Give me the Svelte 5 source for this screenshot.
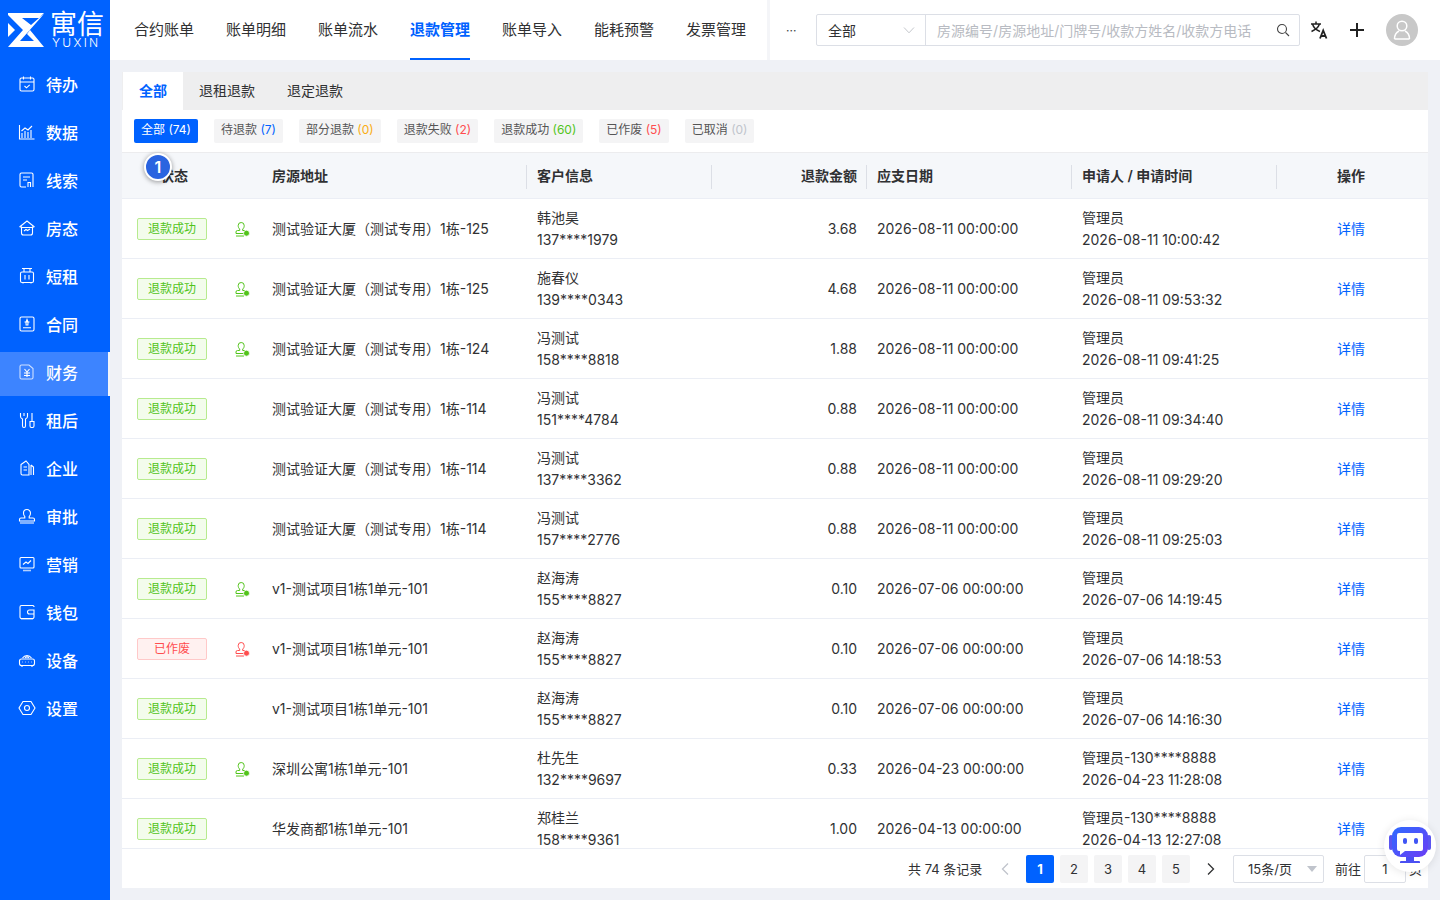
<script>
  const menu = [
    ['待办', 'todo'], ['数据', 'data'], ['线索', 'clue'], ['房态', 'house'], ['短租', 'short'], ['合同', 'contract'],
    ['财务', 'finance'], ['租后', 'after'], ['企业', 'company'], ['审批', 'approve'], ['营销', 'market'], ['钱包', 'wallet'], ['设备', 'device'], ['设置', 'setting']
  ];
  const nav = ['合约账单', '账单明细', '账单流水', '退款管理', '账单导入', '能耗预警', '发票管理'];
  const chips = [
    ['全部', '(74)', 'c-white', true], ['待退款', '(7)', 'c-blue'], ['部分退款', '(0)', 'c-orange'], ['退款失败', '(2)', 'c-red'],
    ['退款成功', '(60)', 'c-green'], ['已作废', '(5)', 'c-red'], ['已取消', '(0)', 'c-gray']
  ];
  const addrA = '测试验证大厦（测试专用）1栋-';
  const v1 = 'v1-测试项目1栋1单元-101';
  const rows = [
    ['ok', 'g', addrA + '125', '韩池昊', '137****1979', '3.68', '2026-08-11', '管理员', '2026-08-11 10:00:42'],
    ['ok', 'g', addrA + '125', '施春仪', '139****0343', '4.68', '2026-08-11', '管理员', '2026-08-11 09:53:32'],
    ['ok', 'g', addrA + '124', '冯测试', '158****8818', '1.88', '2026-08-11', '管理员', '2026-08-11 09:41:25'],
    ['ok', '', addrA + '114', '冯测试', '151****4784', '0.88', '2026-08-11', '管理员', '2026-08-11 09:34:40'],
    ['ok', '', addrA + '114', '冯测试', '137****3362', '0.88', '2026-08-11', '管理员', '2026-08-11 09:29:20'],
    ['ok', '', addrA + '114', '冯测试', '157****2776', '0.88', '2026-08-11', '管理员', '2026-08-11 09:25:03'],
    ['ok', 'g', v1, '赵海涛', '155****8827', '0.10', '2026-07-06', '管理员', '2026-07-06 14:19:45'],
    ['void', 'r', v1, '赵海涛', '155****8827', '0.10', '2026-07-06', '管理员', '2026-07-06 14:18:53'],
    ['ok', '', v1, '赵海涛', '155****8827', '0.10', '2026-07-06', '管理员', '2026-07-06 14:16:30'],
    ['ok', 'g', '深圳公寓1栋1单元-101', '杜先生', '132****9697', '0.33', '2026-04-23', '管理员-130****8888', '2026-04-23 11:28:08'],
    ['ok', '', '华发商都1栋1单元-101', '郑桂兰', '158****9361', '1.00', '2026-04-13', '管理员-130****8888', '2026-04-13 12:27:08']
  ];
  const heads = ['状态', '房源地址', '客户信息', '退款金额', '应支日期', '申请人 / 申请时间', '操作'];
</script>

<div class="page">
  <aside class="side">
    <div class="logo">
      <svg class="logo-mark" viewBox="0 0 36 34" width="36" height="34">
        <path fill="#fff" d="M0 0H36L31 5 H14 L23 12 L31 5 L36 1 L12 28 H26 L19 21 L22 17 L36 34 H0 L15 17 L0 2Z"/>
        <path fill="#0062ff" d="M0 7 L10 17 L0 27Z"/>
        <path fill="#fff" d="M0 10 L7 17 L0 24Z"/>
      </svg>
      <div class="logo-text">
        <div class="logo-cn">寓信</div>
        <div class="logo-en">YUXIN</div>
      </div>
    </div>
    {#each menu as [label, icon]}
      <div class="item" class:active={icon === 'finance'}>
        <svg class="mi" viewBox="0 0 18 18" width="18" height="18" fill="none" stroke="#fff" stroke-width="1.1">
          {#if icon === 'todo'}
            <rect x="2" y="3" width="14" height="13" rx="1.5"/><path d="M2 7h14M5.5 1.5v3M12.5 1.5v3M6.5 11l2 1.8 3.2-3" />
          {:else if icon === 'data'}
            <path d="M1.5 2v14h15M4 15V10M7 15V8M10 15V9M13 15V7M3.5 8 7 5l3 2 4-4"/>
          {:else if icon === 'clue'}
            <path d="M8 16H3.5A1.5 1.5 0 0 1 2 14.500V3.500A1.500 1.500 0 0 1 3.500 2h10A1.500 1.500 0 0 1 15 3.500V16M5 6h7M5 9h4M10 16v-4.500h2.500V16"/>
          {:else if icon === 'house'}
            <path d="M1.500 8 9 2l7.500 6M3.500 7.500V14a2 2 0 0 0 2 2h7a2 2 0 0 0 2-2V7.500M2.500 8.500h13M6 12l2-1.500 1.500 1L12 10"/>
          {:else if icon === 'short'}
            <rect x="2.500" y="5" width="13" height="10.500" rx="1.500"/><path d="M4 1.500h10M6 1.500V5M12 1.500V5M7 8v4.500M11 8v4.500M5 15.500v1M13 15.500v1"/>
          {:else if icon === 'contract'}
            <rect x="2" y="2" width="14" height="14" rx="1.500"/><path d="M5 12.800h8M6.500 7h5M9 4.500l1 2.500-.1 3H8.100L8 7z"/>
          {:else if icon === 'finance'}
            <path opacity=".75" d="M3.500 2H11l4 3.500V14.500A1.500 1.500 0 0 1 13.500 16h-10A1.500 1.500 0 0 1 2 14.500V3.500A1.500 1.500 0 0 1 3.500 2Z"/>
            <path d="M6.500 6 9 9l2.500-3M6 10h6M6 12.500h6M9 9v5"/>
          {:else if icon === 'after'}
            <path d="M2.500 2v3.200a3 3 0 0 0 2 2.800v7a1.500 1.500 0 0 0 3 0V8a3 3 0 0 0 2-2.800V2M6 2v3M12 10.500h4V15a1.500 1.500 0 0 1-1.500 1.500H13.500A1.500 1.500 0 0 1 12 15zM14 2v8.500"/>
          {:else if icon === 'company'}
            <path d="M3 5.500 8 2l3 3.500V16H4.500A1.500 1.500 0 0 1 3 14.500zM5.500 8H9M5.500 11H9M13 6l2.500 2v8M13 16V6"/>
          {:else if icon === 'approve'}
            <path d="M6.800 9.500C5.500 8.600 5.500 7.500 5.500 6a3.500 3.500 0 0 1 7 0c0 1.500 0 2.600-1.300 3.500v1.500h3.800a1.500 1.500 0 0 1 1.500 1.500V14H1.500v-1.500A1.500 1.500 0 0 1 3 11h3.800zM2 16h14"/>
          {:else if icon === 'market'}
            <rect x="2" y="2.500" width="14" height="10.500" rx="1"/><path d="M5 9.500 8 7l2 1.500L13 5.500"/><path stroke-width="1.600" opacity=".7" d="M5 15.500h8"/>
          {:else if icon === 'wallet'}
            <path d="M16 4V3.500A1.500 1.500 0 0 0 14.500 2.500H3.500A1.500 1.500 0 0 0 2 4v10a1.500 1.500 0 0 0 1.500 1.500h11A1.500 1.500 0 0 0 16 14V11M16 7h-4.500a2 2 0 0 0 0 4H16z"/><path opacity=".7" d="M3 16h12"/>
          {:else if icon === 'device'}
            <rect x="1.500" y="8" width="15" height="6.500" rx="2"/><path d="M4 11h.6M7 11h.6M10.200 11h.6M13 11h.6M4 14.500V16M14 14.500V16M4.500 7a5.500 5.500 0 0 1 9 0M7 7a2.500 2.500 0 0 1 4 0"/>
          {:else}
            <path d="M5 2.500h8L17 9l-4 6.500H5L1 9z"/><circle cx="9" cy="9" r="2.500"/>
          {/if}
        </svg>
        <span>{label}</span>
      </div>
    {/each}
  </aside>

  <div class="body">
    <header class="top">
      <nav class="nav">
        {#each nav as n}
          <div class="nav-item" class:on={n === '退款管理'}>{n}</div>
        {/each}
      </nav>
      <div class="tools">
        <div class="more">···</div>
        <div class="search">
          <div class="sel">
            <span>全部</span>
            <svg width="12" height="8" viewBox="0 0 12 8" fill="none" stroke="#c4c7cc"><path d="M1 1.500 6 6.800 11 1.500"/></svg>
          </div>
          <div class="inp">
            <span>房源编号/房源地址/门牌号/收款方姓名/收款方电话</span>
            <svg width="14" height="14" viewBox="0 0 14 14" fill="none" stroke="#444" stroke-width="1.100"><circle cx="6" cy="6" r="4.500"/><path d="M9.500 9.500 13 13"/></svg>
          </div>
        </div>
        <svg class="tr" width="20" height="20" viewBox="0 0 20 20" fill="none" stroke="#222" stroke-width="1.500">
          <path d="M2 4h10M7 1.500V4M3.500 4c1 3.500 3.500 6 7.500 7.500M10.500 4C9.500 7 7 9.500 2.500 11.500"/>
          <path stroke-width="1.800" d="M11 18.500 14.200 10.500 17.500 18.500M12 16h4.500"/>
        </svg>
        <svg class="plus" width="16" height="16" viewBox="0 0 16 16" stroke="#222" stroke-width="2"><path d="M8 1v14M1 8h14"/></svg>
        <div class="avatar">
          <svg width="20" height="22" viewBox="0 0 20 22" fill="none" stroke="#fff" stroke-width="1.500"><circle cx="10" cy="7" r="4.800"/><path d="M2.500 20c0-4.500 2.500-7 4.500-8M17.500 20c0-4.500-2.500-7-4.500-8M2.500 20h15"/></svg>
        </div>
      </div>
    </header>

    <main class="main">
      <div class="tabs">
        <div class="tab on">全部</div>
        <div class="tab">退租退款</div>
        <div class="tab">退定退款</div>
      </div>
      <section class="card">
        <div class="chips">
          {#each chips as [t, n, c, on]}
            <div class="chip" class:chip-on={on}>{t} <span class={c}>{n}</span></div>
          {/each}
        </div>
        <div class="thead grid">
          {#each heads as h, i}
            <div class="th" class:right={i === 3} class:sep={i >= 1 && i <= 5}>{h}</div>
          {/each}
        </div>
        <div class="tbody">
          {#each rows as r}
            <div class="tr-row grid">
              <div class="status">
                {#if r[0] === 'ok'}
                  <span class="tag ok">退款成功</span>
                {:else}
                  <span class="tag void">已作废</span>
                {/if}
                {#if r[1]}
                  <svg class="stamp" width="16" height="16" viewBox="0 0 16 16" fill="none" stroke={r[1] === 'g' ? '#52c41a' : '#ff4d4f'} stroke-width="1">
                    <path d="M5.700 8C4.500 7 4.200 6 4.200 4.500a3 3 0 0 1 6 0C10.200 6 9.900 7 8.700 8v1.500H11.500A1.500 1.500 0 0 1 11 12.500H2V11A1.500 1.500 0 0 1 3.500 9.500H5.700zM2 15h8"/>
                    <circle cx="12.500" cy="12.200" r="3" fill={r[1] === 'g' ? '#52c41a' : '#ff4d4f'} stroke="#fff" stroke-width=".8"/>
                  </svg>
                {/if}
              </div>
              <div class="td">{r[2]}</div>
              <div class="td two"><div>{r[3]}</div><div>{r[4]}</div></div>
              <div class="td right">{r[5]}</div>
              <div class="td">{r[6]} 00:00:00</div>
              <div class="td two"><div>{r[7]}</div><div>{r[8]}</div></div>
              <div class="td link">详情</div>
            </div>
          {/each}
        </div>
        <footer class="pager">
          <span class="total">共 74 条记录</span>
          <svg class="arrow" width="10" height="14" viewBox="0 0 10 14" fill="none" stroke="#c0c4cc" stroke-width="1.300"><path d="M8 1.500 2.500 7 8 12.500"/></svg>
          <div class="pages">
            <span class="pg pg-on">1</span><span class="pg">2</span><span class="pg">3</span><span class="pg">4</span><span class="pg">5</span>
          </div>
          <svg class="arrow next" width="10" height="14" viewBox="0 0 10 14" fill="none" stroke="#303133" stroke-width="1.300"><path d="M2 1.500 7.500 7 2 12.500"/></svg>
          <div class="size"><span>15条/页</span><i class="caret"></i></div>
          <span class="goto">前往</span>
          <div class="jump">1</div>
          <span class="unit">页</span>
        </footer>
      </section>
    </main>
  </div>

  <div class="guide">1</div>
  <div class="bot">
    <svg width="44" height="44" viewBox="0 0 44 44">
      <defs><linearGradient id="g1" x1="0" y1="0" x2="1" y2="1"><stop offset="0" stop-color="#2f6bff"/><stop offset="1" stop-color="#6b3df5"/></linearGradient></defs>
      <rect x="1" y="11" width="4" height="15" rx="2" fill="#5a55f0"/>
      <rect x="39" y="11" width="4" height="15" rx="2" fill="#5a55f0"/>
      <rect x="4" y="3" width="36" height="30" rx="9" fill="url(#g1)"/>
      <path fill="#fff" d="M11 9h22a2 2 0 0 1 2 2v14a2 2 0 0 1-2 2H17l-5 4v-4h-1a2 2 0 0 1-2-2V11a2 2 0 0 1 2-2Z"/>
      <rect x="15" y="14" width="4" height="6" rx="2" fill="#3f55f5"/>
      <rect x="26" y="14" width="4" height="6" rx="2" fill="#3f55f5"/>
      <path fill="#4a50f2" d="M18 33h8v4h-8zM13 37h18a1 1 0 0 1 1 1v1H12v-1a1 1 0 0 1 1-1Z"/>
    </svg>
  </div>
</div>

<style>
  :global(body) {
    margin: 0;
    font-family: Inter, "Noto Sans CJK SC", sans-serif;
    color: #303133;
  }
  .page {
    display: flex;
    height: 100vh;
    overflow: hidden;
    position: relative;
    background: #eff1f6;
  }
  .side {
    width: 110px;
    flex: none;
    background: #0062ff;
    color: #fff;
  }
  .logo {
    height: 60px;
    display: flex;
    padding: 13px 0 0 8px;
    box-sizing: border-box;
    gap: 6px;
  }
  .logo-mark { flex: none; }
  .logo-text { width: 56px; }
  .logo-cn {
    font-size: 27px;
    line-height: 24px;
    height: 24px;
    font-weight: 400;
    white-space: nowrap;
  }
  .logo-en {
    font-size: 12px;
    line-height: 11px;
    letter-spacing: 2.300px;
    font-weight: 300;
    padding-left: 2px;
  }
  .item {
    height: 44px;
    margin-top: 4px;
    padding: 0 0 4px 18px;
    box-sizing: border-box;
    display: flex;
    align-items: center;
    gap: 10px;
    font-size: 16px;
    font-weight: 500;
  }
  .item.active {
    background: #3d84ff;
    border-right: 2px solid #f3f5fa;
  }
  .mi { flex: none; }
  .body {
    flex: 1;
    min-width: 0;
    display: flex;
    flex-direction: column;
  }
  .top {
    height: 60px;
    flex: none;
    background: #fff;
    display: flex;
  }
  .nav {
    display: flex;
    gap: 32px;
    padding: 0 21px 0 24px;
    border-right: 3px solid #f4f5f8;
  }
  .nav-item {
    height: 60px;
    box-sizing: border-box;
    line-height: 60px;
    font-size: 15px;
    color: #303133;
    white-space: nowrap;
  }
  .nav-item.on {
    color: #0062ff;
    font-weight: 600;
    border-bottom: 2px solid #0062ff;
  }
  .tools {
    flex: 1;
    display: flex;
    align-items: center;
    padding-left: 16px;
  }
  .more { width: 30px; font-size: 12px; color: #444; flex: none; }
  .search {
    width: 484px;
    height: 32px;
    box-sizing: border-box;
    border: 1px solid #dcdfe6;
    border-radius: 2px;
    display: flex;
    flex: none;
  }
  .sel {
    width: 109px;
    flex: none;
    box-sizing: border-box;
    border-right: 1px solid #dcdfe6;
    display: flex;
    align-items: center;
    justify-content: space-between;
    padding: 0 10px 0 11px;
    font-size: 14px;
  }
  .inp {
    flex: 1;
    display: flex;
    align-items: center;
    justify-content: space-between;
    padding: 0 9px 0 11px;
    font-size: 14px;
    color: #b8bbc2;
    white-space: nowrap;
  }
  .tr { margin-left: 9px; flex: none; }
  .plus { margin-left: 20px; flex: none; }
  .avatar {
    margin-left: 21px;
    width: 32px;
    height: 32px;
    border-radius: 50%;
    background: #c8c8c8;
    display: flex;
    align-items: center;
    justify-content: center;
    flex: none;
  }
  .main {
    flex: 1;
    min-height: 0;
    display: flex;
    flex-direction: column;
    padding: 12px 12px 12px 12px;
  }
  .tabs {
    height: 38px;
    flex: none;
    background: #eeeeef;
    display: flex;
    padding-left: 1px;
  }
  .tab {
    padding: 0 16px;
    line-height: 38px;
    font-size: 14px;
    color: #303133;
  }
  .tab.on {
    width: 60px;
    box-sizing: border-box;
    text-align: center;
    background: #fff;
    color: #0062ff;
    font-weight: 600;
  }
  .card {
    flex: 1;
    min-height: 0;
    background: #fff;
    display: flex;
    flex-direction: column;
  }
  .chips {
    height: 42px;
    flex: none;
    box-sizing: border-box;
    display: flex;
    gap: 16px;
    padding: 9px 0 0 12px;
  }
  .chip {
    height: 24px;
    line-height: 22px;
    padding: 0 7px;
    box-sizing: border-box;
    border-radius: 2px;
    background: #f4f4f5;
    color: #555;
    font-size: 12px;
    white-space: nowrap;
  }
  .chip-on { background: #0062ff; color: #fff; }
  .c-white { color: #fff; }
  .c-blue { color: #0062ff; }
  .c-orange { color: #faad14; }
  .c-red { color: #ff4d4f; }
  .c-green { color: #52c41a; }
  .c-gray { color: #c0c4cc; }
  .grid {
    display: grid;
    grid-template-columns: 140px 265px 185px 155px 205px 205px 1fr;
  }
  .thead {
    height: 47px;
    flex: none;
    box-sizing: border-box;
    background: #f5f7fa;
    border-top: 1px solid #ececee;
    border-bottom: 1px solid #ebeef5;
  }
  .th {
    position: relative;
    align-self: center;
    font-size: 14px;
    font-weight: 600;
    color: #303133;
    padding: 0 10px;
    line-height: 22px;
    margin-top: 1px;
  }
  .th:first-child { padding-left: 38px; }
  .th:last-child { padding-left: 60px; }
  .th.sep:not(:nth-child(6))::after,
  .th:nth-child(6)::after {
    content: "";
    position: absolute;
    right: 0;
    top: 0;
    width: 1px;
    height: 24px;
    background: #dcdfe6;
  }
  .right { text-align: right; }
  .tbody {
    flex: 1;
    min-height: 0;
    overflow: hidden;
  }
  .tr-row {
    height: 60px;
    box-sizing: border-box;
    border-bottom: 1px solid #ebeef5;
    align-items: center;
    font-size: 14px;
    line-height: 22px;
    color: #303133;
  }
  .status {
    display: flex;
    align-items: center;
    padding-left: 15px;
  }
  .tag {
    width: 70px;
    height: 22px;
    box-sizing: border-box;
    border-radius: 2px;
    font-size: 12px;
    line-height: 20px;
    text-align: center;
    border: 1px solid;
    flex: none;
  }
  .ok { background: #f3fcec; border-color: #b7eb8f; color: #52c41a; }
  .void { background: #fff1f0; border-color: #ffc9c9; color: #ff4d4f; }
  .stamp { margin-left: 27px; flex: none; }
  .td { padding: 0 10px; white-space: nowrap; }
  .link { color: #0062ff; padding-left: 60px; }
  .pager {
    height: 40px;
    flex: none;
    box-sizing: border-box;
    border-top: 1px solid #ebeef5;
    display: flex;
    align-items: center;
    font-size: 13px;
    padding-left: 786px;
    background: #fff;
  }
  .total { width: 92px; flex: none; }
  .arrow { flex: none; }
  .pages { display: flex; gap: 6px; margin-left: 16px; }
  .pg {
    width: 28px;
    height: 28px;
    line-height: 28px;
    text-align: center;
    background: #f4f4f5;
    border-radius: 2px;
    font-size: 13px;
    color: #303133;
  }
  .pg-on { background: #0062ff; color: #fff; font-weight: 700; }
  .next { margin-left: 16px; }
  .size {
    margin-left: 17px;
    width: 91px;
    height: 28px;
    box-sizing: border-box;
    border: 1px solid #dcdfe6;
    border-radius: 2px;
    display: flex;
    align-items: center;
    justify-content: space-between;
    padding: 0 6px 0 14px;
    flex: none;
  }
  .caret {
    width: 0;
    height: 0;
    border-left: 5px solid transparent;
    border-right: 5px solid transparent;
    border-top: 6px solid #c0c4cc;
  }
  .goto { margin-left: 11px; flex: none; }
  .jump {
    margin-left: 3px;
    width: 42px;
    height: 28px;
    box-sizing: border-box;
    border: 1px solid #dcdfe6;
    border-radius: 2px;
    text-align: center;
    line-height: 26px;
    flex: none;
  }
  .unit { margin-left: 3px; flex: none; }
  .guide {
    position: absolute;
    left: 144px;
    top: 153px;
    width: 28px;
    height: 28px;
    box-sizing: border-box;
    border: 2px solid #fff;
    border-radius: 50%;
    background: #2a64e0;
    color: #fff;
    font-size: 16px;
    font-weight: 600;
    line-height: 24px;
    text-align: center;
    box-shadow: 0 1px 5px rgba(0, 0, 0, .4);
  }
  .bot {
    position: absolute;
    left: 1384px;
    top: 820px;
    width: 52px;
    height: 52px;
    border-radius: 50%;
    background: #fff;
    box-shadow: 0 1px 8px rgba(0, 0, 0, .1);
    display: flex;
    align-items: center;
    justify-content: center;
  }
</style>
